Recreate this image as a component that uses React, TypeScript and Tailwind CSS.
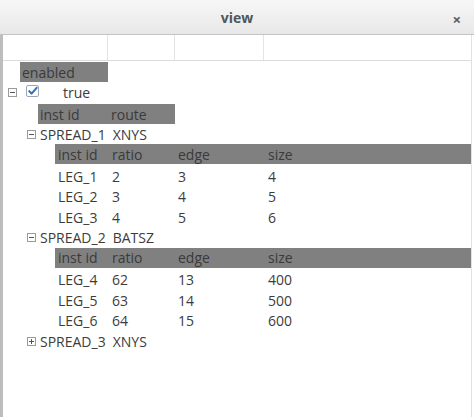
import React from "react";

const font = { fontFamily: '"Open Sans", "DejaVu Sans", sans-serif' };

function Toggle({ open }: { open: boolean }) {
  return (
    <span className="w-[9px] h-[9px] border border-[#9a9a9a] bg-white flex items-center justify-center relative shrink-0">
      <span className="absolute w-[5px] h-px bg-[#555]" />
      {!open && <span className="absolute h-[5px] w-px bg-[#555]" />}
    </span>
  );
}

type Leg = [string, string, string, string];

function Spread({ name, venue, legs, open }: { name: string; venue: string; legs: Leg[]; open: boolean }) {
  return (
    <div>
      <div className="h-[20px] flex items-center pl-[27px] gap-[4px]">
        <Toggle open={open} />
        <span>{name}</span>
        <span className="ml-[3px]">{venue}</span>
      </div>
      {open && (
        <div className="pl-[55px]">
          <div className="h-[20px] bg-[#808080] text-[#3a3a3a] flex items-center">
            <span className="w-[57px] pl-[3px]">inst id</span>
            <span className="w-[66px]">ratio</span>
            <span className="w-[90px]">edge</span>
            <span>size</span>
          </div>
          <div className="pt-[2px]">
            {legs.map((l) => (
              <div key={l[0]} className="h-[20.5px] flex items-center">
                <span className="w-[57px] pl-[3px]">{l[0]}</span>
                <span className="w-[66px]">{l[1]}</span>
                <span className="w-[90px]">{l[2]}</span>
                <span>{l[3]}</span>
              </div>
            ))}
          </div>
        </div>
      )}
    </div>
  );
}

export default function App() {
  return (
    <div className="w-[474px] h-[417px] bg-white flex flex-col text-[14px] text-[#3c3c3c] overflow-hidden" style={font}>
      {/* title bar */}
      <div className="h-[35px] shrink-0 bg-gradient-to-b from-[#f7f7f7] to-[#e8e8e8] border-b border-[#c4c4c4] flex items-center justify-center relative">
        <span className="font-bold text-[#4f575a] text-[14px]">view</span>
        <span className="absolute right-[13px] top-[8px] text-[#56606a] font-bold text-[15px]">×</span>
      </div>

      <div className="flex-1 border-l-[3px] border-[#bdbdbd] border-r border-r-[#e2e2e2] mr-[2px] flex flex-col">
        {/* empty column headers */}
        <div className="h-[26px] shrink-0 flex border-b border-[#dcdcdc]">
          <div className="w-[105px] border-r border-[#e4e4e4]" />
          <div className="w-[67px] border-r border-[#e4e4e4]" />
          <div className="w-[89px] border-r border-[#e4e4e4]" />
          <div className="flex-1" />
        </div>

        <div className="pt-px">
          <div className="ml-[17px] w-[88px] h-[20px] bg-[#808080] text-[#3a3a3a] flex items-center pl-[2px]">enabled</div>

          <div className="h-[21px] flex items-center pl-[5px]">
            <Toggle open />
            <span className="ml-[9px] w-[13px] h-[12px] border border-[#9aa7b8] bg-white rounded-[2px] flex items-center justify-center -mt-[4px]">
              <svg viewBox="0 0 12 12" className="w-[12px] h-[12px]">
                <path d="M2.5 6.2 L5 8.8 L10.5 2.5" fill="none" stroke="#2f6fc4" strokeWidth="2.2" strokeLinecap="round" strokeLinejoin="round" />
              </svg>
            </span>
            <span className="ml-[24px]">true</span>
          </div>

          <div className="ml-[35px] w-[137px] h-[20px] bg-[#808080] text-[#3a3a3a] flex items-center mt-px">
            <span className="w-[73px] pl-[2px]">inst id</span>
            <span>route</span>
          </div>

          <div className="-ml-[3px]">
            <Spread
              name="SPREAD_1"
              venue="XNYS"
              open
              legs={[
                ["LEG_1", "2", "3", "4"],
                ["LEG_2", "3", "4", "5"],
                ["LEG_3", "4", "5", "6"],
              ]}
            />
            <Spread
              name="SPREAD_2"
              venue="BATSZ"
              open
              legs={[
                ["LEG_4", "62", "13", "400"],
                ["LEG_5", "63", "14", "500"],
                ["LEG_6", "64", "15", "600"],
              ]}
            />
            <Spread name="SPREAD_3" venue="XNYS" open={false} legs={[]} />
          </div>
        </div>
      </div>
    </div>
  );
}
